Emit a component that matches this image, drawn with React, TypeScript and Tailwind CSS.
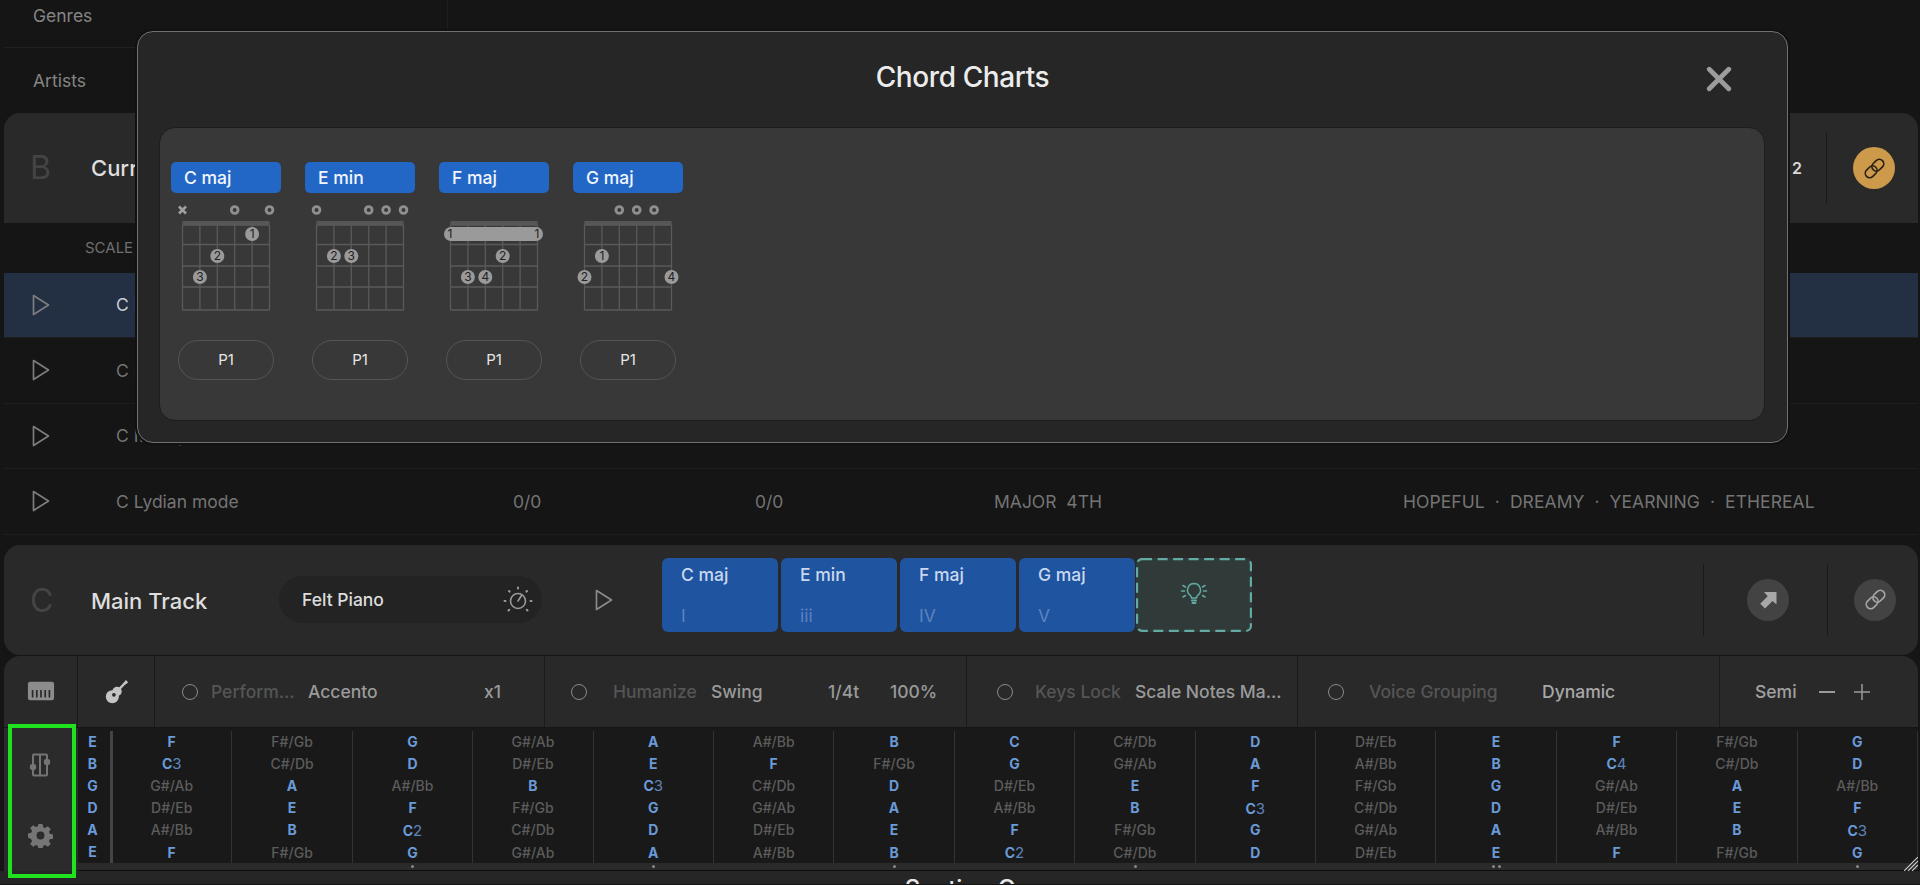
const STRINGS = [
  ["F", "F#/Gb", "G", "G#/Ab", "A", "A#/Bb", "B", "C", "C#/Db", "D", "D#/Eb", "E", "F", "F#/Gb", "G"],
  ["C3", "C#/Db", "D", "D#/Eb", "E", "F", "F#/Gb", "G", "G#/Ab", "A", "A#/Bb", "B", "C4", "C#/Db", "D"],
  ["G#/Ab", "A", "A#/Bb", "B", "C3", "C#/Db", "D", "D#/Eb", "E", "F", "F#/Gb", "G", "G#/Ab", "A", "A#/Bb"],
  ["D#/Eb", "E", "F", "F#/Gb", "G", "G#/Ab", "A", "A#/Bb", "B", "C3", "C#/Db", "D", "D#/Eb", "E", "F"],
  ["A#/Bb", "B", "C2", "C#/Db", "D", "D#/Eb", "E", "F", "F#/Gb", "G", "G#/Ab", "A", "A#/Bb", "B", "C3"],
  ["F", "F#/Gb", "G", "G#/Ab", "A", "A#/Bb", "B", "C2", "C#/Db", "D", "D#/Eb", "E", "F", "F#/Gb", "G"],
];
const OPEN = ["E", "B", "G", "D", "A", "E"];
const FRET_DOTS: Record<number, number> = { 2: 1, 4: 1, 6: 1, 8: 1, 11: 2, 14: 1 };

const CHARTS = [
  {
    name: "C maj",
    marks: ["x", "", "", "o", "", "o"],
    dots: [[4, 0, 1], [2, 1, 2], [1, 2, 3]],
    barre: false,
  },
  {
    name: "E min",
    marks: ["o", "", "", "o", "o", "o"],
    dots: [[1, 1, 2], [2, 1, 3]],
    barre: false,
  },
  {
    name: "F maj",
    marks: ["", "", "", "", "", ""],
    dots: [[3, 1, 2], [1, 2, 3], [2, 2, 4]],
    barre: true,
  },
  {
    name: "G maj",
    marks: ["", "", "o", "o", "o", ""],
    dots: [[1, 1, 1], [0, 2, 2], [5, 2, 4]],
    barre: false,
  },
];

const ROW_Y = [32, 51.5, 73, 94, 117];
const DOT_Y = [41, 63, 84];
const stringX = (i: number) => 11.5 + i * 17.4;

const PlayIcon = ({ className = "" }: { className?: string }) => (
  <svg viewBox="0 0 18 22" className={"h-[22px] w-[18px] " + className} fill="none" stroke="currentColor" strokeWidth="1.7" strokeLinejoin="round">
    <path d="M1.5 1.5 L16.5 11 L1.5 20.5 Z" />
  </svg>
);

const LinkIcon = ({ className = "" }: { className?: string }) => (
  <svg viewBox="0 0 24 24" className={"h-[25px] w-[25px] " + className} fill="none" stroke="currentColor" strokeWidth="1.6">
    <rect x="2.550" y="10.950" width="12.500" height="8.500" rx="4.250" transform="rotate(-45 8.800 15.200)" />
    <rect x="8.950" y="4.550" width="12.500" height="8.500" rx="4.250" transform="rotate(-45 15.200 8.800)" />
  </svg>
);

const ChordChart = ({ chart }: { chart: (typeof CHARTS)[number] }) => (
  <div className="flex w-[110px] flex-col">
    <div className="flex h-[31px] items-center rounded-[5px] bg-[#2367c6] pl-[13px] pt-px text-[17.5px] font-medium text-[#f2f6fc]">
      {chart.name}
    </div>
    <svg viewBox="0 0 110 137" className="h-[137px] w-[110px] overflow-visible">
      {chart.marks.map((m, i) =>
        m === "o" ? (
          <circle key={i} cx={stringX(i)} cy="17" r="3.4" fill="none" stroke="#8f8f8f" strokeWidth="2.8" />
        ) : m === "x" ? (
          <path key={i} d={`M${stringX(i) - 3.5} 13.5 l7 7 m0 -7 l-7 7`} stroke="#a0a0a0" strokeWidth="2.6" />
        ) : null
      )}
      <rect x="11.5" y="28" width="87" height="4" fill="#565656" />
      {ROW_Y.map((y) => (
        <line key={y} x1="11.5" x2="98.5" y1={y} y2={y} stroke="#5a5a5a" strokeWidth="1.3" />
      ))}
      {[0, 1, 2, 3, 4, 5].map((i) => (
        <line key={i} x1={stringX(i)} x2={stringX(i)} y1="32" y2="117" stroke="#5a5a5a" strokeWidth="1.3" />
      ))}
      {chart.barre && (
        <g>
          <rect x="5" y="34" width="99" height="14" rx="7" fill="#9a9a9a" />
          <text x="11" y="45" textAnchor="middle" fontSize="12" fontFamily="Inter" fill="#222">1</text>
          <text x="98" y="45" textAnchor="middle" fontSize="12" fontFamily="Inter" fill="#222">1</text>
        </g>
      )}
      {chart.dots.map(([s, r, f]) => (
        <g key={`${s}-${r}`}>
          <circle cx={stringX(s)} cy={DOT_Y[r]} r="7" fill="#9a9a9a" />
          <text x={stringX(s)} y={DOT_Y[r] + 4} textAnchor="middle" fontSize="12" fontFamily="Inter" fill="#222">{f}</text>
        </g>
      ))}
    </svg>
    <div className="mx-auto mt-[10px] flex h-10 w-24 items-center justify-center rounded-full border border-[#555] text-[15px] text-[#e6e6e6]">
      P1
    </div>
  </div>
);

const Note = ({ note }: { note: string }) => {
  if (note.includes("#")) return <span className="font-medium text-[#5c5c5c]">{note}</span>;
  return (
    <span className="font-bold text-[#6a9ad8]">
      {note[0]}
      {note[1] && <span className="text-[15px] font-normal text-[#5d85bd]">{note[1]}</span>}
    </span>
  );
};

const ScaleRow = ({ name, a, b, c, mood, active }: { name: string; a: string; b: string; c: string; mood: string; active?: boolean }) => (
  <div
    className={
      "grid grid-cols-[112px_397px_242px_239px_409px_1fr] items-center whitespace-pre border-b border-[#1e1e1e] text-[17.5px] " +
      (active ? "h-[65px] bg-[#233044] text-[#c9ced6]" : "h-[65.5px] text-[#747474]")
    }
  >
    <div className="pl-[28px] text-[#7d7d7d]">
      <PlayIcon />
    </div>
    <div className="pt-px">{name}</div>
    <div className="pt-px">{a}</div>
    <div className="pt-px">{b}</div>
    <div className="pt-px">{c}</div>
    <div className="pt-px tracking-[0.07px]">{mood}</div>
  </div>
);

const Radio = () => <span className="h-4 w-4 shrink-0 rounded-full border-[1.5px] border-[#8a8a8a]" />;

const Divider = () => <div className="h-[72px] w-px bg-[#191919]" />;

export default function App() {
  return (
    <div className="relative h-[885px] w-[1920px] overflow-hidden bg-[#151515] pl-[4px] pr-[2px] font-['Inter',sans-serif]">
      {/* sidebar behind the dialog */}
      <div className="h-[113px] w-[444px] border-r border-[#1f1f1f] text-[17.5px] text-[#858585]">
        <div className="flex h-[48px] items-center border-b border-[#202020] pl-[29px] pb-[14px]">Genres</div>
        <div className="flex h-[65px] items-center pl-[29px] pt-[2px]">Artists</div>
      </div>

      {/* section B */}
      <div className="flex h-[110px] items-center rounded-t-[16px] bg-[#292929] pr-[23px]">
        <span className="w-[87px] pl-[26px] text-[32px] text-[#444]">B</span>
        <span className="text-[22px] font-medium text-[#dedede]">Current Scale</span>
        <span className="ml-auto mr-[24px] text-base font-semibold text-[#d8d8d8]">2</span>
        <Divider />
        <div className="ml-[26px] flex h-[42px] w-[42px] items-center justify-center rounded-full bg-[#cd9a4b] text-[#2a2015]">
          <LinkIcon />
        </div>
      </div>
      <div className="flex h-[50px] items-center pl-[81px] text-[15px] text-[#6f6f6f]">SCALE</div>
      <ScaleRow active name="C Major" a="0/0" b="0/0" c="MAJOR" mood="HAPPY  ·  BRIGHT  ·  PURE" />
      <ScaleRow name="C Dorian" a="0/0" b="0/0" c="MAJOR" mood="JOYFUL  ·  BRIGHT  ·  WARM  ·  RELAXED" />
      <ScaleRow name="C Mixolydian mode" a="0/0" b="0/0" c="MAJOR" mood="BLUESY  ·  WARM" />
      <ScaleRow name="C Lydian mode" a="0/0" b="0/0" c="MAJOR  4TH" mood="HOPEFUL  ·  DREAMY  ·  YEARNING  ·  ETHEREAL" />

      {/* main track */}
      <div className="mt-[10px] flex h-[110px] items-center rounded-[16px] bg-[#292929]">
        <span className="w-[87px] pl-[26px] pt-[3px] text-[32px] text-[#444]">C</span>
        <span className="w-[188px] pt-[3px] text-[22px] font-medium text-[#dedede]">Main Track</span>
        <div className="flex h-[47px] w-[263px] items-center justify-between rounded-full bg-[#232323] pl-[23px] pr-[8px] text-[17.5px] font-medium text-[#dcdcdc]">
          <span className="pt-px">Felt Piano</span>
          <svg viewBox="0 0 32 32" className="h-8 w-8 text-[#9a9a9a]" fill="none" stroke="currentColor" strokeWidth="1.6" strokeLinecap="round">
            <circle cx="16" cy="17" r="7.5" />
            <path d="M16 17 L19.5 11.5" />
            <path d="M16 3.500v1 M7 7l.6.7 M25 7l-.6.7 M2.500 17h1 M28.500 17h1 M6.500 26.500l.7-.7 M25.500 26.500l-.7-.7" strokeWidth="2" />
          </svg>
        </div>
        <PlayIcon className="ml-[53px] text-[#8a8a8a]" />
        <div className="mb-[10px] ml-[49px] flex gap-[3px]">
          {[
            ["C maj", "I"],
            ["E min", "iii"],
            ["F maj", "IV"],
            ["G maj", "V"],
          ].map(([n, d]) => (
            <div key={n} className="flex h-[74px] w-[116px] flex-col justify-between rounded-[6px] bg-[#1f54a1] pb-[2px] pl-[19px] pt-[4px] text-[17.5px] font-medium">
              <span className="text-[#c9d8ee]">{n}</span>
              <span className="font-normal text-[#5d83bd]">{d}</span>
            </div>
          ))}
          <div className="relative -ml-[2px] flex h-[74px] w-[116px] items-center justify-center rounded-[6px] bg-[#2f3a39] text-[#62aaa2]">
            <svg viewBox="0 0 116 74" className="absolute inset-0 h-[74px] w-[116px]" fill="none" stroke="currentColor" strokeWidth="2.2" strokeDasharray="10 5.500">
              <rect x="1.100" y="1.100" width="113.800" height="71.800" rx="5" />
            </svg>
            <svg viewBox="0 0 32 32" className="mb-[4px] h-8 w-8" fill="none" stroke="currentColor" strokeWidth="1.5" strokeLinecap="round">
              <path d="M16 6.500a6.500 6.500 0 0 0-4 11.600c.9.800 1.300 1.600 1.500 2.900h5c.2-1.300.6-2.100 1.500-2.900a6.500 6.500 0 0 0-4-11.600z" />
              <path d="M14 23.500h4 M14.500 26h3" strokeWidth="2" />
              <path d="M5 8.500l2.500 1.500 M27 8.500l-2.500 1.500 M3.500 14h3 M25.500 14h3 M5 20l2.500-1.500 M27 20l-2.500-1.500" />
            </svg>
          </div>
        </div>
        <div className="ml-[451px] flex items-center">
          <Divider />
          <div className="ml-[43px] mr-[38px] flex h-[42px] w-[42px] items-center justify-center rounded-full bg-[#434343] text-[#a8a8a8]">
            <svg viewBox="0 0 24 24" className="h-6 w-6" fill="currentColor">
              <path d="M8 4h12.500v12.500l-4-3.600-7.500 7.600-4.800-4.800 7.500-7.500z" />
            </svg>
          </div>
        </div>
        <Divider />
        <div className="ml-[26px] flex h-[42px] w-[42px] items-center justify-center rounded-full bg-[#434343] text-[#a8a8a8]">
          <LinkIcon />
        </div>
      </div>

      {/* toolbar */}
      <div className="mt-px flex h-[71px] rounded-t-[16px] bg-[#292929] text-[17.5px] font-medium">
        <div className="flex w-[74px] items-center justify-center border-r border-[#1a1a1a] text-[#8c8c8c]">
          <svg viewBox="0 0 30 24" className="h-[24px] w-[28px]">
            <rect x="1" y="2" width="28" height="20" rx="2.500" fill="currentColor" />
            <path d="M6 11v8 M10.500 11v8 M15 11v8 M19.500 11v8 M24 11v8" stroke="#292929" strokeWidth="1.800" />
          </svg>
        </div>
        <div className="flex w-[77px] items-center justify-center border-r border-[#1a1a1a] text-[#c4c4c4]">
          <svg viewBox="0 0 24 24" className="h-[25px] w-[25px]" fill="currentColor">
            <circle cx="8" cy="17" r="6.300" />
            <circle cx="12.500" cy="12" r="4.500" />
            <path d="M12 12.500L20.500 3.500" stroke="currentColor" strokeWidth="2.200" />
            <path d="M19 3.500l2-2.500 2.200 2-2.400 2.300z" />
            <circle cx="9.500" cy="15.200" r="1.800" fill="#292929" />
          </svg>
        </div>
        <div className="flex w-[390px] items-center border-r border-[#1a1a1a] pl-[27px] pt-[2px]">
          <Radio />
          <span className="ml-[13px] w-[97px] whitespace-nowrap text-[#555]">Perform...</span>
          <span className="w-[176px] text-[#9a9a9a]">Accento</span>
          <span className="text-[#9a9a9a]">x1</span>
        </div>
        <div className="flex w-[422px] items-center border-r border-[#1a1a1a] pl-[26px] pt-[2px]">
          <Radio />
          <span className="ml-[26px] w-[98px] text-[#555]">Humanize</span>
          <span className="w-[117px] text-[#9a9a9a]">Swing</span>
          <span className="w-[62px] text-[#9a9a9a]">1/4t</span>
          <span className="text-[#9a9a9a]">100%</span>
        </div>
        <div className="flex w-[331px] items-center border-r border-[#1a1a1a] pl-[30px] pt-[2px]">
          <Radio />
          <span className="ml-[22px] w-[100px] whitespace-nowrap text-[#555]">Keys Lock</span>
          <span className="whitespace-nowrap text-[#9a9a9a]">Scale Notes Ma...</span>
        </div>
        <div className="flex w-[422px] items-center border-r border-[#1a1a1a] pl-[30px] pt-[2px]">
          <Radio />
          <span className="ml-[25px] w-[173px] text-[#555]">Voice Grouping</span>
          <span className="text-[#a8a8a8]">Dynamic</span>
        </div>
        <div className="flex flex-1 items-center pl-[35px] pt-[2px] text-[#a0a0a0]">
          Semi
          <span className="ml-[22px] h-[1.500px] w-[16px] bg-[#9a9a9a]" />
          <svg viewBox="0 0 16 16" className="ml-[19px] h-4 w-4" stroke="#9a9a9a" strokeWidth="1.500">
            <path d="M8 0v16 M0 8h16" />
          </svg>
        </div>
      </div>

      {/* fretboard */}
      <div className="relative mt-px flex h-[143px]">
        <div className="flex w-[74px] flex-col items-center gap-[46px] bg-[#2b2b2b] pr-[2px] pt-[25px] text-[#757575]">
          <svg viewBox="0 0 22 24" className="h-[24px] w-[22px]" fill="none" stroke="currentColor" strokeWidth="2">
            <rect x="4" y="1.500" width="14" height="21" rx="1" />
            <path d="M11 1.500v21" />
            <circle cx="4" cy="14" r="3.200" fill="currentColor" stroke="none" />
            <circle cx="18" cy="9" r="3.200" fill="currentColor" stroke="none" />
          </svg>
          <svg viewBox="0 0 24 24" className="h-[25px] w-[25px]" fill="currentColor" fillRule="evenodd">
            <path d="M10 1h4l.6 3.100 1.900.8 2.600-1.800 2.800 2.800-1.800 2.600.8 1.900 3.100.6v4l-3.100.6-.8 1.900 1.800 2.600-2.800 2.800-2.600-1.800-1.900.8-.6 3.100h-4l-.6-3.100-1.900-.8-2.600 1.800-2.800-2.800 1.800-2.600-.8-1.900L0 14v-4l3.100-.6.8-1.900-1.800-2.600 2.800-2.800 2.600 1.800 1.900-.8zM12 8.200a3.800 3.800 0 1 0 0 7.600 3.800 3.800 0 0 0 0-7.600z" />
          </svg>
        </div>
        <div className="flex flex-1 flex-col">
          <div className="flex h-[135px] bg-[#191919] pt-[3px] text-sm">
            <div className="flex w-[32px] shrink-0 flex-col items-center pr-[3px]">
              {OPEN.map((n, i) => (
                <span key={i} className="flex h-[22.2px] items-center font-bold leading-none text-[#6a9ad8]">{n}</span>
              ))}
            </div>
            <div className="-mr-px w-[3px] shrink-0 bg-[#444]" />
            <div className="grid flex-1 grid-cols-15">
              {Array.from({ length: 15 }).map((_, col) => (
                <div key={col} className="flex flex-col items-center border-r border-[#333]">
                  {STRINGS.map((s, r) => (
                    <span key={r} className="flex h-[22.2px] items-center leading-none">
                      <Note note={s[col]} />
                    </span>
                  ))}
                </div>
              ))}
            </div>
          </div>
          <div className="flex h-[7px] bg-[#2a2a2a]">
            <div className="w-[34px] shrink-0" />
            <div className="grid flex-1 grid-cols-15">
              {Array.from({ length: 15 }).map((_, col) => (
                <div key={col} className="flex items-center justify-center gap-[3px]">
                  {Array.from({ length: FRET_DOTS[col] ?? 0 }).map((_, i) => (
                    <span key={i} className="h-[3px] w-[3px] rounded-full bg-[#888]" />
                  ))}
                </div>
              ))}
            </div>
          </div>
          <div className="h-px bg-[#0c0c0c]" />
        </div>
        <svg viewBox="0 0 14 14" className="absolute bottom-[0px] right-0 h-[14px] w-[14px]" stroke="#cfcfcf" strokeWidth="1.100">
          <path d="M0 14L14 0 M4 14L14 4 M8 14L14 8" />
        </svg>
        {/* green highlight drawn on the screenshot */}
        <div className="absolute -top-[4px] left-[4px] h-[154px] w-[68px] border-4 border-[#1fe31f]" />
      </div>

      {/* next section, cut by the window */}
      <div className="-mr-[2px] -ml-[4px] flex h-[13px] justify-center overflow-hidden bg-[#262626]">
        <span className="mt-[6px] text-[24px] font-medium leading-none text-[#e8e8e8]">Section C</span>
      </div>

      {/* chord charts dialog */}
      <div className="absolute left-[137px] top-[31px] flex h-[412px] w-[1651px] flex-col rounded-[16px] border border-[#717171] bg-[#262626] shadow-[0_0_0_2px_#111]">
        <div className="relative flex h-[95px] items-center justify-center pb-[6px]">
          <h1 className="text-[28px] font-medium tracking-[-0.4px] text-[#ececec]">Chord Charts</h1>
          <svg viewBox="0 0 24 24" className="absolute right-[55px] top-[34px] h-[26px] w-[26px]" stroke="#9c9c9c" strokeWidth="4.4" strokeLinecap="round">
            <path d="M3 3L21 21 M21 3L3 21" />
          </svg>
        </div>
        <div className="ml-[21px] mr-[22px] flex h-[294px] gap-6 rounded-[16px] border border-[#1d1d1d] bg-[#383838] pl-[11px] pt-[34px]">
          {CHARTS.map((c) => (
            <ChordChart key={c.name} chart={c} />
          ))}
        </div>
      </div>
    </div>
  );
}
